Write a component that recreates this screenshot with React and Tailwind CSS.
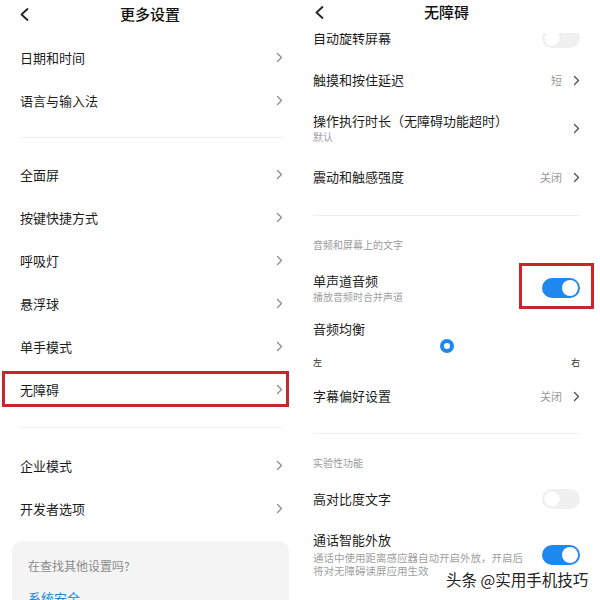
import React from "react";

const font = "font-['Noto_Sans_CJK_SC','Noto_Sans',sans-serif]";

function Back() {
  return (
    <svg width="9" height="13" viewBox="0 0 9 13" fill="none">
      <polyline points="7.5,1 1.5,6.5 7.5,12" stroke="#222" strokeWidth="1.8" strokeLinecap="round" strokeLinejoin="round" />
    </svg>
  );
}

function Chevron({ dark }) {
  return (
    <svg width="7" height="11" viewBox="0 0 7 11" fill="none">
      <polyline
        points="1.5,1.5 5.5,5.5 1.5,9.5"
        stroke={dark ? "#555" : "#8a8a8a"}
        strokeWidth={dark ? "1.4" : "1.2"}
        strokeLinecap="round"
        strokeLinejoin="round"
      />
    </svg>
  );
}

function Toggle({ on }) {
  return (
    <div
      className={
        "w-[38px] h-[20px] rounded-full flex items-center px-[2px] " +
        (on ? "bg-[#1f88ef] justify-end" : "bg-[#f0f0f0] justify-start")
      }
    >
      <div className={"w-[16px] h-[16px] rounded-full bg-white " + (on ? "" : "shadow-[0_0_1px_rgba(0,0,0,0.15)]")} />
    </div>
  );
}

function LeftRow({ label, boxed }) {
  return (
    <div className="relative shrink-0 h-[43px] flex items-center justify-between pl-[20px] pr-[17px]">
      <span className="text-[13px] leading-[16px] text-[#1c1c1c]">{label}</span>
      <Chevron />
      {boxed && (
        <div className="absolute left-[2px] right-[11px] top-[3px] bottom-[4px] border-[3px] border-[#c9252f]" />
      )}
    </div>
  );
}

function LeftDivider({ h, pt }) {
  return (
    <div className={h + " " + pt + " shrink-0 pl-[20px] pr-[18px]"}>
      <div className="h-px bg-[#efefef]" />
    </div>
  );
}

function RightRow({ label, value, sub, h, children }) {
  return (
    <div className={h + " shrink-0 flex items-center justify-between pl-[13px] pr-[20px]"}>
      <div className="flex flex-col">
        <span className="text-[13px] leading-[16px] text-[#1c1c1c]">{label}</span>
        {sub && <span className="mt-[1px] text-[10px] leading-[13px] text-[#a0a0a0]">{sub}</span>}
      </div>
      {children || (
        <div className="flex items-center gap-[11px]">
          {value && <span className="text-[11px] text-[#999]">{value}</span>}
          <Chevron dark />
        </div>
      )}
    </div>
  );
}

function RightDivider({ h, pt }) {
  return (
    <div className={h + " " + pt + " shrink-0 pl-[13px] pr-[20px]"}>
      <div className="h-px bg-[#efefef]" />
    </div>
  );
}

function Section({ label, h }) {
  return (
    <div className={h + " shrink-0 flex items-center pl-[13px]"}>
      <span className="text-[10px] leading-[12px] text-[#9a9a9a]">{label}</span>
    </div>
  );
}

function LeftPanel() {
  return (
    <div className="w-[300px] h-[600px] flex flex-col overflow-hidden bg-white">
      <div className="h-[28px] shrink-0 grid grid-cols-[60px_1fr_60px] items-center">
        <div className="pl-[20px] flex">
          <Back />
        </div>
        <div className="text-center text-[15px] font-medium text-[#111]">更多设置</div>
        <div />
      </div>
      <div className="pt-[8px] shrink-0 flex flex-col">
        <LeftRow label="日期和时间" />
        <LeftRow label="语言与输入法" />
        <LeftDivider h="h-[31px]" pt="pt-[15px]" />
        <LeftRow label="全面屏" />
        <LeftRow label="按键快捷方式" />
        <LeftRow label="呼吸灯" />
        <LeftRow label="悬浮球" />
        <LeftRow label="单手模式" />
        <LeftRow label="无障碍" boxed />
        <LeftDivider h="h-[33px]" pt="pt-[16px]" />
        <LeftRow label="企业模式" />
        <LeftRow label="开发者选项" />
        <div className="shrink-0 mt-[11px] ml-[12px] mr-[11px] rounded-[10px] bg-[#f4f4f4] px-[16px] pt-[18px] h-[80px]">
          <div className="text-[12px] leading-[14px] text-[#8a8a8a]">在查找其他设置吗?</div>
          <div className="mt-[17px] text-[13px] leading-[16px] text-[#1a86d9]">系统安全</div>
        </div>
      </div>
    </div>
  );
}

function RightPanel() {
  return (
    <div className="relative w-[300px] h-[600px] flex flex-col bg-white">
      <div className="h-[33px] shrink-0">
        <div className="h-[25px] grid grid-cols-[56px_1fr_63px] items-center">
          <div className="pl-[15px] flex">
            <Back />
          </div>
          <div className="text-center text-[15px] font-medium text-[#111]">无障碍</div>
          <div />
        </div>
      </div>
      <div className="flex-1 overflow-hidden">
        <div className="mt-[-16px] flex flex-col">
          <RightRow label="自动旋转屏幕" h="h-[42px]">
            <Toggle />
          </RightRow>
          <RightRow label="触摸和按住延迟" value="短" h="h-[42px]" />
          <RightRow label="操作执行时长（无障碍功能超时）" sub="默认" h="h-[54px]" />
          <RightRow label="震动和触感强度" value="关闭" h="h-[44px]" />
          <RightDivider h="h-[32px]" pt="pt-[16px]" />
          <Section label="音频和屏幕上的文字" h="h-[28px]" />
          <RightRow label="单声道音频" sub="播放音频时合并声道" h="h-[57px]">
            <div className="relative">
              <Toggle on />
              <div className="absolute -left-[23px] -right-[14px] -top-[15px] -bottom-[11px] border-[3px] border-[#c9252f]" />
            </div>
          </RightRow>
          <div className="h-[58px] shrink-0 pt-[5px] pl-[13px] pr-[20px] flex flex-col">
            <span className="text-[13px] leading-[16px] text-[#1c1c1c]">音频均衡</span>
            <div className="mt-[2px] h-[14px] flex justify-center">
              <div className="w-[14px] h-[14px] rounded-full border-[4px] border-[#1f88ef] bg-white" />
            </div>
            <div className="mt-[4px] flex justify-between text-[9px] leading-[12px] text-[#333]">
              <span>左</span>
              <span>右</span>
            </div>
          </div>
          <RightRow label="字幕偏好设置" value="关闭" h="h-[44px]" />
          <RightDivider h="h-[30px]" pt="pt-[15px]" />
          <Section label="实验性功能" h="h-[30px]" />
          <RightRow label="高对比度文字" h="h-[42px]">
            <Toggle />
          </RightRow>
          <div className="shrink-0 pt-[12px] pl-[13px] pr-[20px] flex items-center justify-between">
            <div className="flex flex-col">
              <span className="text-[13px] leading-[16px] text-[#1c1c1c]">通话智能外放</span>
              <span className="mt-[3px] text-[10.5px] leading-[13px] text-[#a0a0a0]">
                通话中使用距离感应器自动开启外放，开启后
                <br />
                将对无障碍读屏应用生效
              </span>
            </div>
            <Toggle on />
          </div>
        </div>
      </div>
      <div className="absolute left-[146px] top-[568px] whitespace-nowrap text-[15.5px] leading-[22px] text-[#222] [text-shadow:0_0_2px_#fff]">
        头条 @实用手机技巧
      </div>
    </div>
  );
}

export default function App() {
  return (
    <div className={"w-[600px] h-[600px] flex bg-white overflow-hidden " + font}>
      <LeftPanel />
      <RightPanel />
    </div>
  );
}
